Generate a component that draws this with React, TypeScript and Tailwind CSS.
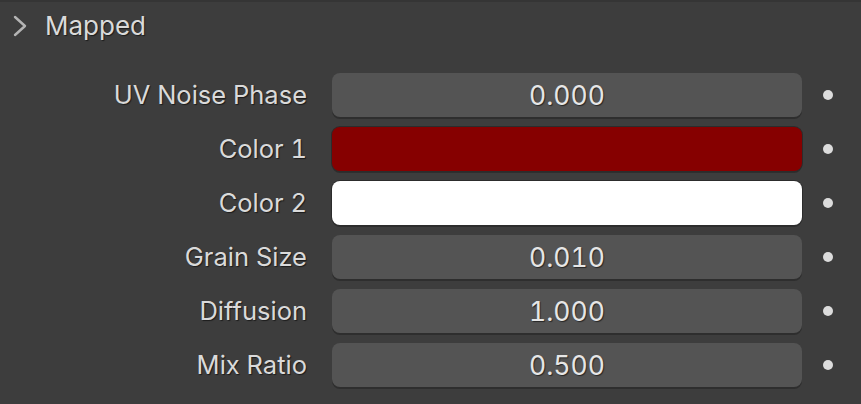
import React from "react";

type Row = {
  label: string;
  value?: string;
  color?: string;
};

const rows: Row[] = [
  { label: "UV Noise Phase", value: "0.000" },
  { label: "Color 1", color: "#860000" },
  { label: "Color 2", color: "#ffffff" },
  { label: "Grain Size", value: "0.010" },
  { label: "Diffusion", value: "1.000" },
  { label: "Mix Ratio", value: "0.500" },
];

const textShadow = "[text-shadow:1px_1px_1px_rgba(0,0,0,0.55)]";

const PropRow = ({ row }: { row: Row }) => {
  return (
    <div className="flex items-center h-[44px]">
      <div
        className={`w-[307px] text-right text-[25.5px] tabular-nums text-[#dadada] leading-none ${textShadow}`}
      >
        {row.label}
      </div>
      {row.color ? (
        <div
          className="ml-[25px] w-[470px] h-[44px] rounded-lg ring-1 ring-[#2c2c2c] shadow-[0_2px_0_#2e2e2e]"
          style={{ backgroundColor: row.color }}
        />
      ) : (
        <div
          className={`ml-[25px] w-[470px] h-[44px] rounded-lg bg-[#545454] shadow-[0_2px_0_#2e2e2e] flex items-center justify-center text-[26.5px] tabular-nums text-[#e6e6e6] leading-none ${textShadow}`}
        >
          {row.value}
        </div>
      )}
      <div className="ml-[21px] w-[10px] h-[10px] rounded-full bg-[#dcdcdc]" />
    </div>
  );
};

const App = () => {
  return (
    <div
      className="w-[861px] h-[404px] bg-[#3d3d3d] border-t-2 border-[#353535] overflow-hidden"
      style={{ fontFamily: "Inter, 'Noto Sans', sans-serif" }}
    >
      <div className="flex items-center h-[48px] pl-[12px]">
        <svg width="16" height="24" viewBox="0 0 16 24" className="text-[#b4b4b4]">
          <path
            d="M3 3 L13 12 L3 21"
            fill="none"
            stroke="currentColor"
            strokeWidth="2.4"
            strokeLinecap="round"
            strokeLinejoin="round"
          />
        </svg>
        <span
          className={`ml-[17px] text-[26px] text-[#dadada] leading-none ${textShadow}`}
        >
          Mapped
        </span>
      </div>
      <div className="flex flex-col gap-[10px] mt-[23px]">
        {rows.map((row) => (
          <PropRow key={row.label} row={row} />
        ))}
      </div>
    </div>
  );
};

export default App;
